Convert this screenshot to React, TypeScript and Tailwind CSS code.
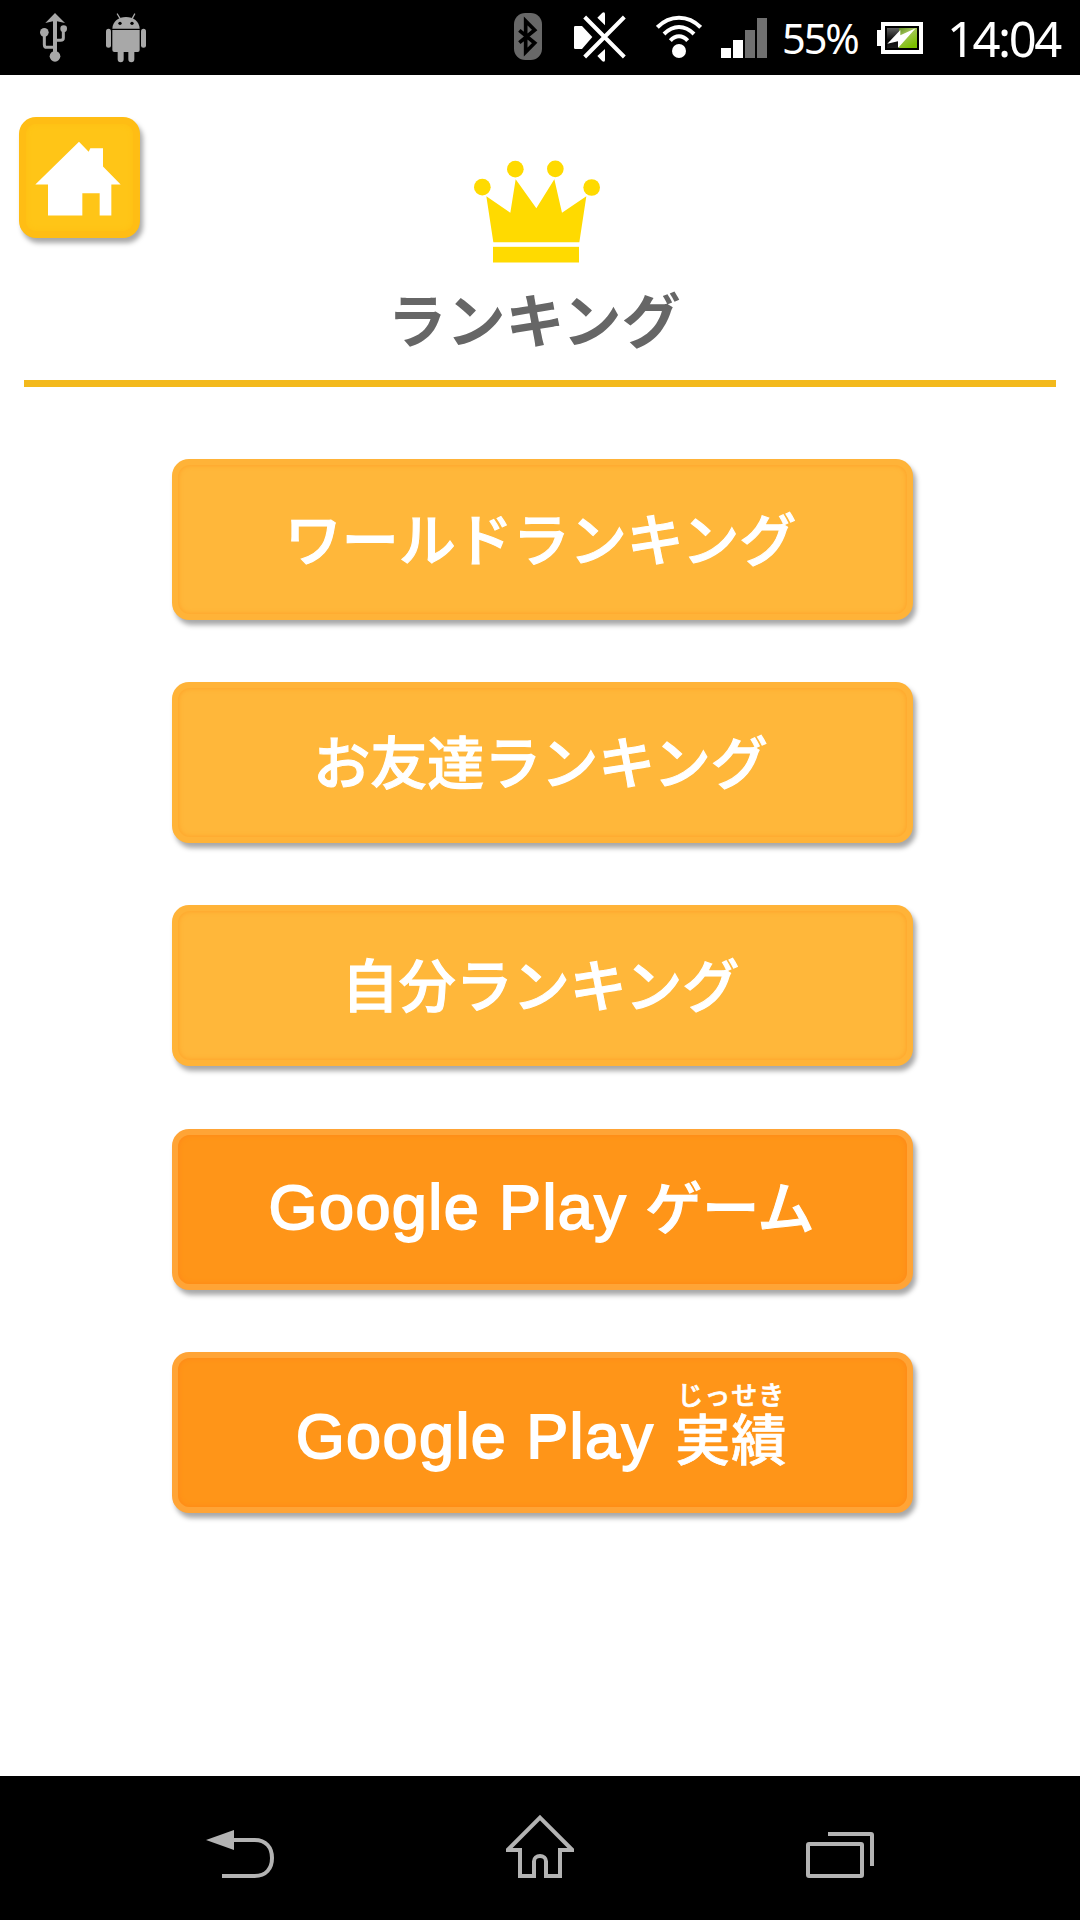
import React from 'react';

const UsbIcon = () => (
	<svg viewBox="120 0 84 225" className="w-7 h-[75px]" fill="#a8a8a8">
		<path d="M165 39L195 69L171 64V160H159V64L136 69Z" />
		<circle cx="165" cy="169" r="16" />
		<circle cx="133" cy="97" r="13" />
		<circle cx="191" cy="86" r="10" />
		<path d="M133 97V134Q133 142 141 142H160" fill="none" stroke="#a8a8a8" strokeWidth="9" />
		<path d="M190 86V114Q190 121 182 121H170" fill="none" stroke="#a8a8a8" strokeWidth="9" />
	</svg>
);

const AndroidIcon = () => (
	<svg viewBox="318 0 120 225" className="w-10 h-[75px]" fill="#a8a8a8">
		<path d="M337 86C338 64 356 51 378 51S418 64 419 86Z" />
		<path d="M352 42L360 55M404 42L397 55" stroke="#a8a8a8" strokeWidth="4" strokeLinecap="round" />
		<circle cx="360" cy="70" r="5" fill="#000" />
		<circle cx="396" cy="70" r="5" fill="#000" />
		<path d="M337 90H419V150Q419 156 413 156H403V178A9 9 0 0 1 385 178V156H371V178A9 9 0 0 1 353 178V156H343Q337 156 337 150Z" />
		<rect x="318" y="86" width="15" height="57" rx="7.5" />
		<rect x="423" y="86" width="15" height="57" rx="7.5" />
	</svg>
);

const BluetoothIcon = () => (
	<svg viewBox="72 0 84 225" className="w-7 h-[75px]">
		<rect x="72" y="39" width="84" height="141" rx="34" fill="#686868" />
		<path d="M88 91L134 129L107 156V63L134 90L88 128" fill="none" stroke="#000" strokeWidth="11" />
	</svg>
);

const MuteIcon = () => (
	<svg viewBox="252 0 156 225" className="w-[52px] h-[75px]" fill="#fff">
		<path d="M256 78H276L307 111L276 147H256Q252 147 252 143V82Q252 78 256 78Z" />
		<path d="M322 53L337 38Q345 34 345 42V76ZM322 168L337 184Q345 188 345 180V147Z" />
		<path d="M284 51L403 171M403 51L284 171" stroke="#fff" strokeWidth="12" />
	</svg>
);

const WifiIcon = () => (
	<svg viewBox="498 0 138 225" className="w-[46px] h-[75px]" fill="none" stroke="#fff" strokeWidth="12">
		<path d="M502 82Q530 53 567 53T632 82" />
		<path d="M522 102Q543 81 567 81T612 102" />
		<path d="M541 122Q553 109 567 109T593 122" />
		<circle cx="567" cy="153" r="21" fill="#fff" stroke="none" />
	</svg>
);

const SignalIcon = () => (
	<svg viewBox="693 0 138 225" className="w-[46px] h-[75px]">
		<path d="M693 144H723V174H693ZM729 120H759V174H729Z" fill="#fff" />
		<path d="M765 90H795V174H765ZM801 54H831V174H801Z" fill="#707070" />
	</svg>
);

const BatteryIcon = () => (
	<svg viewBox="321 0 138 225" className="w-[46px] h-[75px]">
		<defs>
			<linearGradient id="empty" x1="0" y1="0" x2="0" y2="1">
				<stop offset="0" stopColor="#606060" />
				<stop offset="0.6" stopColor="#0a0a0a" />
				<stop offset="1" stopColor="#1c1c1c" />
			</linearGradient>
			<linearGradient id="charge" x1="0" y1="0" x2="0.6" y2="1">
				<stop offset="0" stopColor="#5d8a1f" />
				<stop offset="0.4" stopColor="#a4c75a" />
				<stop offset="1" stopColor="#7cc000" />
			</linearGradient>
		</defs>
		<path d="M333 66H459V162H333V138H321V90H333Z" fill="#fff" />
		<rect x="345" y="78" width="102" height="72" fill="#000" />
		<rect x="351" y="84" width="36" height="60" fill="url(#empty)" />
		<rect x="387" y="84" width="54" height="60" fill="url(#charge)" />
		<path d="M352 131L391 90V106L437 85L384 144V124Z" fill="#fff" />
	</svg>
);

const HomeIcon = () => (
	<svg viewBox="106 124 258 224" className="w-[86px] h-[75px]" fill="#fff">
		<path d="M238 126L267 156L272 145H310V200L363 254H335V347H300V280H248V347H145V254H107Z" />
	</svg>
);

const CrownIcon = () => (
	<svg viewBox="313 60 378 308" className="w-[126px] h-[103px]" fill="#ffda00">
		<circle cx="338" cy="141" r="25" />
		<circle cx="437" cy="87" r="25" />
		<circle cx="557" cy="86" r="25" />
		<circle cx="666" cy="142" r="25" />
		<path d="M350 168L422 218L438 117L500 204L554 117L577 218L650 168L629 306H371Z" />
		<rect x="370" y="320" width="258" height="47" />
	</svg>
);

const buttons = [
	{ label: 'ワールドランキング', orange: false },
	{ label: 'お友達ランキング', orange: false },
	{ label: '自分ランキング', orange: false },
	{ label: 'ゲーム', orange: true, google: true },
	{ label: '実績', orange: true, google: true, ruby: 'じっせき' },
];

type MenuButtonProps = {
	label: string;
	orange: boolean;
	google?: boolean;
	ruby?: string;
};

function MenuButton({ label, orange, google, ruby }: MenuButtonProps) {
	return (
		<button
			className={`w-[741px] h-[161px] rounded-[17px] p-[6px] shadow-[3px_5px_5px_rgba(0,0,0,0.34)] ${
				orange ? 'bg-[#ffa436]' : 'bg-[#ffb338]'
			}`}
		>
			<span
				className={`flex w-full h-full items-center justify-center rounded-[12px] text-white whitespace-nowrap ${
					orange
						? 'pr-px bg-[#ff9518] shadow-[inset_0_0_4px_1px_#ff8a18]'
						: 'pr-[3px] bg-[#ffb73a] shadow-[inset_0_0_4px_1px_#ffa62c]'
				}`}
			>
				{google && (
					<span
						className={`font-['Liberation_Sans',sans-serif] text-[63px] leading-none tracking-[1.4px] [-webkit-text-stroke:1.8px_white] ${
							ruby ? 'pt-[8px] mr-[21px]' : 'pb-[4px] mr-[18px]'
						}`}
					>
						Google Play
					</span>
				)}
				{ruby ? (
					<span className="flex flex-col items-center font-medium pb-[20px] [-webkit-text-stroke:0.7px_white]">
						<span className="text-[26px] tracking-[1px] leading-[28px]">{ruby}</span>
						<span className="text-[55px] tracking-[1px] leading-[57px]">{label}</span>
					</span>
				) : (
					<span
						className={`text-[57px] leading-none font-medium [-webkit-text-stroke:1.1px_white] ${
							google ? 'pb-[9px]' : 'pb-[7px]'
						}`}
					>
						{label}
					</span>
				)}
			</span>
		</button>
	);
}

export default function App() {
	return (
		<div className="w-[1080px] h-[1920px] flex flex-col bg-white overflow-hidden font-['Noto_Sans_CJK_JP',sans-serif]">
			{/* Status bar */}
			<div className="h-[75px] shrink-0 bg-black text-white flex items-center justify-between pl-10 pr-[17px] font-['Noto_Sans',sans-serif]">
				<div className="flex items-center gap-[38px]">
					<UsbIcon />
					<AndroidIcon />
				</div>
				<div className="flex items-center">
					<BluetoothIcon />
					<span className="w-8" />
					<MuteIcon />
					<span className="w-[30px]" />
					<WifiIcon />
					<span className="w-[19px]" />
					<SignalIcon />
					<span className="w-[108px] pl-[15px] pt-[2px] text-[41.5px] leading-none tracking-[-2.1px]">55%</span>
					<span className="w-[2px]" />
					<BatteryIcon />
					<span className="w-[140px] pl-[24px] pt-px text-[49px] leading-none tracking-[-2.5px]">14:04</span>
				</div>
			</div>

			{/* Header */}
			<header className="h-[305px] shrink-0 grid grid-cols-[121px_1fr_126px] pl-[19px] pr-[21px]">
				<button className="mt-[42px] w-[121px] h-[121px] rounded-[17px] p-[7px] bg-[#ffbd14] shadow-[3px_5px_5px_rgba(0,0,0,0.34)]">
					<span className="flex w-full h-full items-center justify-center rounded-[10px] pt-[2px] pr-[3px] bg-[#ffc517] shadow-[inset_0_0_4px_1px_#ffc014]">
						<HomeIcon />
					</span>
				</button>
				<div className="flex flex-col items-center pt-[85px]">
					<CrownIcon />
					<h1 className="mt-[25px] pr-[5px] text-[59px] leading-[60px] font-bold text-[#666]">ランキング</h1>
				</div>
			</header>
			<div className="h-[7px] mb-px shrink-0 mx-6 bg-[#f3b91c]" />

			{/* Menu */}
			<main className="flex-1 flex flex-col items-center gap-[62.2px] pt-[71px] pl-1">
				{buttons.map((item) => (
					<MenuButton key={item.label} {...item} />
				))}
			</main>

			{/* Navigation bar */}
			<nav className="h-36 shrink-0 bg-black flex justify-center gap-[232px]">
				<svg viewBox="78 48 204 432" className="w-[68px] h-36" fill="none" stroke="#b3b3b3" strokeWidth="12">
					<path d="M78 240L162 210V270Z" fill="#b3b3b3" stroke="none" />
					<path d="M160 240H224C258 240 276 262 276 294S258 348 224 348H126" />
				</svg>
				<svg viewBox="978 48 204 432" className="w-[68px] h-36" fill="none" stroke="#b3b3b3" strokeWidth="12">
					<path
						d="M1080 173L1177 270H1140V348H1098V304A18 16 0 0 0 1062 304V348H1020V270H983Z"
						strokeLinejoin="miter"
					/>
				</svg>
				<svg viewBox="78 48 204 432" className="w-[68px] h-36" fill="none" stroke="#b3b3b3" strokeWidth="12">
					<rect x="84" y="252" width="162" height="96" rx="3" />
					<path d="M144 222H273Q276 222 276 225V318" />
				</svg>
			</nav>
		</div>
	);
}
